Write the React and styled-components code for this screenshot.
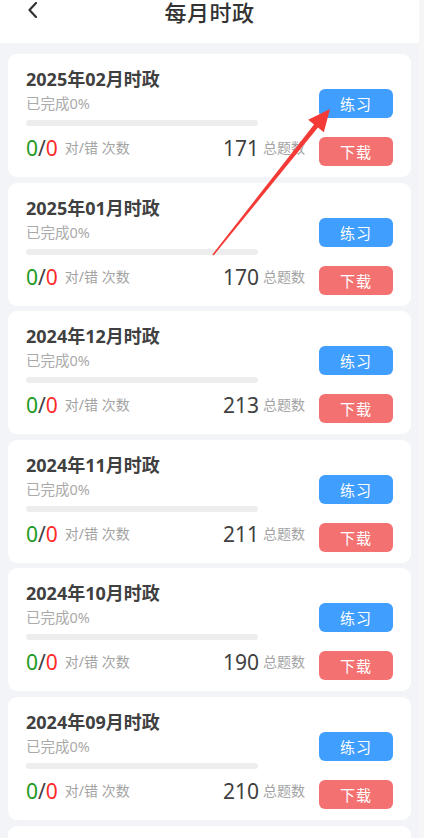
import React from "react";
import styled, { createGlobalStyle } from "styled-components";

const Global = createGlobalStyle`
  html, body { margin: 0; padding: 0; overflow: hidden; }
  body { font-family: "Noto Sans", "Noto Sans CJK SC", sans-serif; background: #f3f4f8; }
`;

const Page = styled.div`
  position: relative;
  display: flex;
  width: 424px;
  height: 838px;
  overflow: hidden;
`;

const Main = styled.div`
  width: 419px;
  display: flex;
  flex-direction: column;
  background: #f3f4f8;
`;

const ScrollStrip = styled.div`
  width: 5px;
  background: #f6f6f7;
`;

const Header = styled.header`
  position: relative;
  flex-shrink: 0;
  height: 43px;
  background: #ffffff;
  display: flex;
  justify-content: center;
  align-items: flex-start;
`;

const BackButton = styled.div`
  position: absolute;
  left: 26px;
  top: 2px;
  width: 14px;
  height: 16px;
  display: flex;
`;

const Title = styled.h1`
  margin: 1px 0 0;
  font-size: 22px;
  line-height: 22px;
  font-weight: 500;
  color: #333333;
  letter-spacing: 0.5px;
`;

const List = styled.div`
  flex-shrink: 0;
  display: flex;
  flex-direction: column;
  gap: 5.6px;
  padding: 11px 8px 0;
`;

const Card = styled.div`
  height: 123px;
  box-sizing: border-box;
  background: #ffffff;
  border-radius: 9px;
  padding: 14px 18px 0 18px;
  display: flex;
  gap: 14px;
  flex-shrink: 0;
`;

const Left = styled.div`
  width: 279px;
  display: flex;
  flex-direction: column;
`;

const CardTitle = styled.div`
  font-size: 18px;
  line-height: 22px;
  font-weight: 700;
  color: #404040;
`;

const Progress = styled.div`
  margin-top: 4px;
  font-size: 14.5px;
  line-height: 18px;
  color: #aaaaaa;
`;

const Bar = styled.div`
  margin-top: 8px;
  width: 232px;
  height: 6px;
  border-radius: 3px;
  background: #ededed;
`;

const Stats = styled.div`
  margin-top: 8px;
  height: 28px;
  display: flex;
  align-items: center;
  justify-content: space-between;
`;

const Group = styled.div`
  display: flex;
  align-items: center;
  gap: ${(p) => p.$gap || 6}px;
`;

const Big = styled.span`
  font-size: 21px;
  line-height: 28px;
  color: ${(p) => p.$color || "#404040"};
`;

const Small = styled.span`
  font-size: 14px;
  line-height: 28px;
  color: #a3a3a3;
`;

const Buttons = styled.div`
  padding-top: 21px;
  display: flex;
  flex-direction: column;
  gap: 19px;
`;

const Btn = styled.div`
  width: 74px;
  height: 29px;
  border-radius: 6px;
  background: ${(p) => (p.$kind === "red" ? "#f47171" : "#409efe")};
  color: #ffffff;
  font-size: 15px;
  display: flex;
  align-items: center;
  justify-content: center;
  letter-spacing: 1px;
`;

const Overlay = styled.svg`
  position: absolute;
  left: 0;
  top: 0;
  pointer-events: none;
`;

const items = [
  ["2025年02月时政", 171],
  ["2025年01月时政", 170],
  ["2024年12月时政", 213],
  ["2024年11月时政", 211],
  ["2024年10月时政", 190],
  ["2024年09月时政", 210],
  ["2024年08月时政", 205],
];

export default function App() {
  return (
    <>
      <Global />
      <Page>
        <Main>
          <Header>
            <BackButton>
              <svg width="14" height="16" viewBox="0 0 14 16">
                <path d="M10 1 L3.5 8 L10 15" fill="none" stroke="#333" strokeWidth="2.2" strokeLinecap="round" strokeLinejoin="round" />
              </svg>
            </BackButton>
            <Title>每月时政</Title>
          </Header>
          <List>
            {items.map(([t, n]) => (
              <Card key={t}>
                <Left>
                  <CardTitle>{t}</CardTitle>
                  <Progress>已完成0%</Progress>
                  <Bar />
                  <Stats>
                    <Group $gap={7}>
                      <Big>
                        <Big $color="#1e9a1e">0</Big>/<Big $color="#ff2a2a">0</Big>
                      </Big>
                      <Small>对/错 次数</Small>
                    </Group>
                    <Group $gap={4}>
                      <Big>{n}</Big>
                      <Small>总题数</Small>
                    </Group>
                  </Stats>
                </Left>
                <Buttons>
                  <Btn>练习</Btn>
                  <Btn $kind="red">下载</Btn>
                </Buttons>
              </Card>
            ))}
          </List>
        </Main>
        <ScrollStrip />
        <Overlay width="424" height="838" viewBox="0 0 424 838">
          <polygon
            points="212.4,254.5 314.05,124.44 308.2,119.75 330,109 323.8,132.25 317.95,127.56 213.6,255.5"
            fill="#f43a36"
          />
        </Overlay>
      </Page>
    </>
  );
}
